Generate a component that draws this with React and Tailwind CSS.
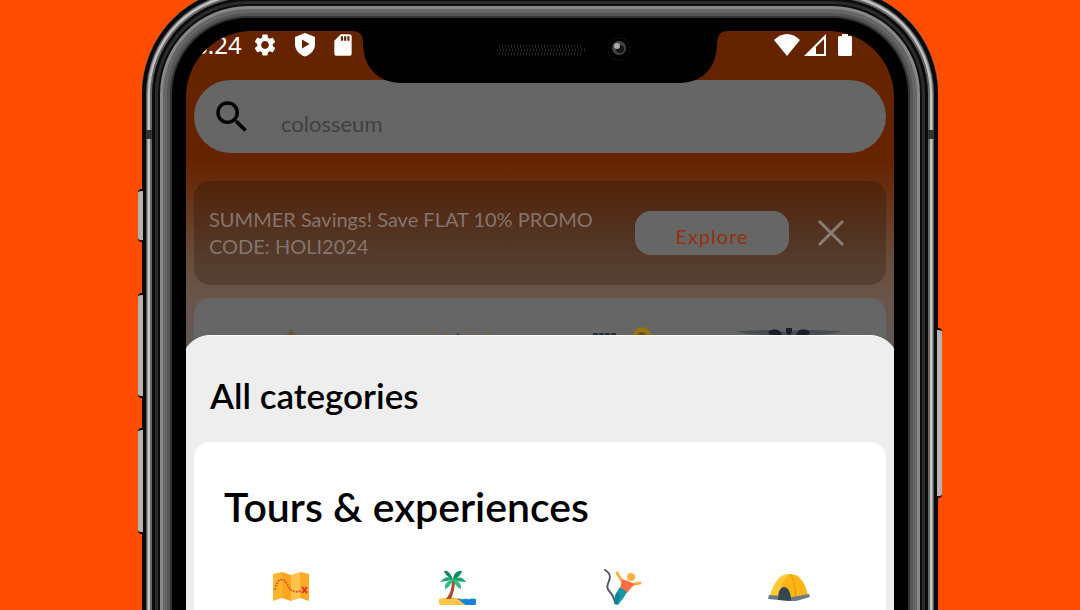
import { MdSearch, MdSettings, MdSdCard } from 'react-icons/md';

const ShieldPlayIcon = () => (
  <svg className="h-[26px] w-[22px]" viewBox="0 0 22 26" fill="currentColor">
    <path
      fillRule="evenodd"
      d="M11 1 1 5v7c0 6 4 10.500 10 12.500 6-2 10-6.500 10-12.500V5L11 1Zm-3 6.500v9l7.500-4.500L8 7.500Z"
    />
  </svg>
);

const WifiIcon = () => (
  <svg className="h-[22px] w-[26px]" viewBox="0 0 26 22" fill="currentColor">
    <path d="M13 22 0 6C4 2 8.500 0 13 0s9 2 13 6L13 22Z" />
  </svg>
);

const SignalIcon = () => (
  <svg className="h-[22px] w-[22px]" viewBox="0 0 22 22" fill="currentColor">
    <path fillRule="evenodd" d="M22 0v22H0L22 0Zm-2 5-8 8v7h8V5Z" />
  </svg>
);

const BatteryIcon = () => (
  <svg className="h-[22px] w-[14px]" viewBox="0 0 14 22" fill="currentColor">
    <path d="M4 0h6v2h3l1 1v18l-1 1H1l-1-1V3l1-1h3V0Z" />
  </svg>
);

const MapIcon = () => (
  <svg className="h-[30px] w-9" viewBox="0 0 36 30">
    <path d="M0 2 9 0v26l-9 3V2Z" fill="#ffb52e" />
    <path d="m9 0 9 3v26l-9-3V0Z" fill="#fda51c" />
    <path d="m18 3 9-3v26l-9 3V3Z" fill="#ffc24a" />
    <path d="m27 0 9 2v27l-9-3V0Z" fill="#fdab24" />
    <path
      d="M2 17C4 7 10 4 14 12c3 7 7 9 14 7"
      fill="none"
      stroke="#e0492f"
      strokeWidth="2"
      strokeLinecap="round"
      strokeDasharray="0 3"
    />
    <path d="m29 15 5 6m0-6-5 6" stroke="#e0392f" strokeWidth="2" />
  </svg>
);

const BeachIcon = () => (
  <svg className="h-[35px] w-[37px]" viewBox="0 0 37 35">
    <path d="M0 29c8-2 15-2 23 0l10 6H1l-1-1v-5Z" fill="#fdc648" />
    <path d="M18 29c3-1 4 1 7 0s4 1 6 0 4 0 6 0v5l-1 1h-9c-3-1-4-4-9-6Z" fill="#1583e0" />
    <path d="M13 10h3c0 8-2 14-4 19H7c4-5 6-11 6-19Z" fill="#ae4a2e" />
    <path d="M14 10C11 6 6 6 1 12c4-1 8-1 13-2Z" fill="#1ba46c" />
    <path d="M14 10C12 3 8 0 5 1c1 4 5 6 9 9Z" fill="#0f8a5a" />
    <path d="M14 10c0-6 4-10 9-9-1 4-4 7-9 9Z" fill="#128f5e" />
    <path d="M14 10c5-4 10-3 13 2-5 0-8-1-13-2Z" fill="#1ba46c" />
    <path d="M14 10c-5 0-9 4-8 9 3-1 6-4 8-9Zm0 0c5 0 9 4 8 9-3-1-6-4-8-9Z" fill="#2cbf83" />
  </svg>
);

const BungeeIcon = () => (
  <svg className="h-9 w-[38px]" viewBox="0 0 38 36">
    <path
      d="M1 1c5 3 6 6 4 11s-3 7 1 11 4 7 5 10"
      fill="none"
      stroke="#4b5b67"
      strokeWidth="2"
      strokeLinecap="round"
    />
    <path d="m13 4 5 8 8 4 10-2" fill="none" stroke="#fbb040" strokeWidth="3" strokeLinecap="round" strokeLinejoin="round" />
    <circle cx="27" cy="8" r="4" fill="#fbb040" />
    <path d="m18 10 6 2 7 3-4 4-4 5-7-4 2-10Z" fill="#ff6f43" />
    <path d="m16 18 7 5-3 5-6 8-4-1 1-9 5-8Z" fill="#1597a8" />
    <path d="m13 23 3 4-3 8-3-1 3-11Z" fill="#117f93" />
  </svg>
);

const TentIcon = () => (
  <svg className="h-[28px] w-[42px]" viewBox="0 0 42 28">
    <path d="M2 23C6 10 11 1 22 1c10 0 15 9 18 21l-15 4L2 23Z" fill="#fdb515" />
    <path d="M22 1c-7 5-9 12-10 22l-10 1C6 10 11 1 22 1Z" fill="#ffc933" />
    <path d="M22 1c4 5 5 14 6 24" fill="none" stroke="#e2970c" />
    <path d="m1 22 23 2 17-3 1 3-14 4h-4L0 26l1-4Z" fill="#6b7a83" />
    <path d="M10 27c0-8 2-13 6-13s7 5 7 14l-13-1Z" fill="#37474f" />
  </svg>
);

const Notch = () => (
  <div className="absolute left-1/2 top-0 z-20 -translate-x-1/2">
    <svg className="h-[54px] w-[376px]" viewBox="0 0 376 54">
      <path
        d="M0 0h376c-8 0-10 4-11 12 0 24-14 40-38 40H50C26 52 11 36 11 12 11 4 8 0 0 0Z"
        fill="#000"
      />
      <path d="M147 15h84M145 19h88M147 23h84" stroke="#292929" strokeWidth="3" strokeDasharray="1 2" />
      <circle cx="267" cy="18" r="11" fill="none" stroke="#333" strokeDasharray="1 2" />
      <circle cx="267" cy="17" r="7" fill="#444" />
      <circle cx="268" cy="18" r="4" fill="#151515" />
      <circle cx="265" cy="15" r="3" fill="#aaa" />
    </svg>
  </div>
);

const categories = [
  { name: 'Tours', Icon: MapIcon },
  { name: 'Beaches', Icon: BeachIcon },
  { name: 'Adventure', Icon: BungeeIcon },
  { name: 'Camping', Icon: TentIcon },
];

const StatusBar = () => (
  <div className="flex h-[49px] items-start justify-between pl-2 pr-[42px] text-white">
    <div className="flex items-center">
      <span className="font-['Noto_Sans',sans-serif] text-2xl leading-7">8:24</span>
      <MdSettings className="ml-2.5 size-[26px]" />
      <span className="ml-4">
        <ShieldPlayIcon />
      </span>
      <MdSdCard className="ml-3.5 size-[26px]" />
    </div>
    <div className="flex items-center pt-[3px]">
      <WifiIcon />
      <span className="ml-1">
        <SignalIcon />
      </span>
      <span className="ml-3">
        <BatteryIcon />
      </span>
    </div>
  </div>
);

const PromoBanner = () => (
  <div className="mt-7 flex h-[104px] items-center rounded-2xl bg-black/20 pl-[15px] pr-[39px]">
    <p className="flex-1 text-xl leading-[27px] text-[#84756e]">
      SUMMER Savings! Save FLAT 10% PROMO CODE: HOLI2024
    </p>
    <button className="h-11 w-[154px] rounded-2xl bg-[#666] pt-1.5 text-xl tracking-wider text-[#962f0c]">
      Explore
    </button>
    <button aria-label="Close" className="ml-[26px]">
      <svg className="size-8" viewBox="0 0 32 32" stroke="#8a7d75" strokeWidth="3">
        <path d="m4 4 24 24M28 4 4 28" />
      </svg>
    </button>
  </div>
);

// tops of the shortcut icons that stay visible above the sheet
const ShortcutCard = () => (
  <div className="mt-[13px] grid h-20 grid-cols-4 items-start justify-items-center rounded-t-2xl bg-[#666] px-3.5 pt-[29px]">
    <svg className="h-2 w-4" viewBox="0 0 16 8" fill="#6b5738">
      <path d="m8 1 2 4 5 3H1l5-3 2-4Z" />
    </svg>
    <svg className="h-2 w-16" viewBox="0 0 64 8" fill="#776238">
      <path d="M0 5h2v2H0zM8 2h3v2H8zM20 6h3v2h-3zM27 3h2v2h-2zM38 1h3v2h-3zM46 5h3v2h-3zM61 2h3v2h-3z" />
      <path d="M32 6h2v2h-2z" fill="#2c4468" />
    </svg>
    <svg className="h-2 w-16" viewBox="0 0 64 8">
      <path d="M2 7h24" stroke="#25303c" strokeWidth="2" strokeDasharray="5 1" />
      <circle cx="51" cy="9" r="9" fill="#96730c" />
      <circle cx="51" cy="9" r="4" fill="#6b4e10" />
    </svg>
    <svg className="h-2 w-[106px]" viewBox="0 0 106 8">
      <path d="M0 4c18 0 30-3 50 1 20-4 38-1 56-1-12 4-24 4-40 4H40C25 8 12 8 0 4Z" fill="#474b52" />
      <path d="M32 5c6-5 12-3 14 3H34l-2-3Zm42 0c-6-5-12-3-14 3h12l2-3ZM50 1h6v4l-2 3h-2l-2-3V1Z" fill="#182029" />
    </svg>
  </div>
);

const App = () => {
  return (
    <div className="flex h-screen overflow-hidden bg-[#ff4d00] px-[142px] font-['Lato',sans-serif]">
      {/* Phone body */}
      <div className="relative -mb-16 -mt-3 flex flex-1 rounded-t-[106px] bg-black px-11 pt-[43px] shadow-[inset_0_0_0_4px_#0a0a0a,inset_0_0_0_5px_#555,inset_0_0_0_6px_#999,inset_0_0_0_8px_#c4c4c4,inset_0_0_0_10px_#666,inset_0_0_0_13px_#0c0c0c,inset_0_0_0_16px_#2b2b2b,inset_0_0_0_18px_#0c0c0c,inset_0_0_0_21px_#888,inset_0_0_0_25px_#666,inset_0_0_0_28px_#555,inset_0_0_0_30px_#333]">
        <div className="absolute -left-1 top-[201px] h-[53px] w-[5px] rounded-l-sm border-y-2 border-black bg-[#b5b5b0]" />
        <div className="absolute -left-1 top-[305px] h-[105px] w-[5px] rounded-l-sm border-y-2 border-black bg-[#b5b5b0]" />
        <div className="absolute -left-1 top-[440px] h-[106px] w-[5px] rounded-l-sm border-y-2 border-black bg-[#b5b5b0]" />
        <div className="absolute -right-1 top-[340px] h-[170px] w-[5px] rounded-r-sm border-y-2 border-black bg-[#b5b5b0]" />
        <div className="absolute left-1 top-[142px] h-[9px] w-1.5 bg-[#333]" />
        <div className="absolute right-1 top-[142px] h-[9px] w-1.5 bg-[#333]" />

        {/* Screen */}
        <div className="relative flex flex-1 flex-col overflow-hidden rounded-t-[66px] bg-[linear-gradient(#662300_0px,#662300_130px,#69503f_240px,#69554c_270px,#5f5855_320px)]">
          <Notch />
          <StatusBar />

          <div className="px-2">
            <label className="flex h-[73px] items-center rounded-full bg-[#666] pl-[17px]">
              <MdSearch className="size-[42px] text-black" />
              <input
                type="search"
                aria-label="Search"
                placeholder="colosseum"
                className="ml-7 flex-1 bg-transparent pt-3.5 text-[22px] placeholder:text-[#404040] focus:outline-none"
              />
            </label>
            <PromoBanner />
            <ShortcutCard />
          </div>

          {/* Bottom sheet */}
          <div className="relative -mx-1 -mt-[43px] flex flex-1 flex-col rounded-t-[28px] border-t border-white bg-[#eee] px-3">
            <h1 className="px-4 pb-[25px] pt-[37px] text-[35px] font-semibold leading-[44px] text-black">
              All categories
            </h1>
            <div className="flex-1 rounded-t-2xl bg-white px-3.5">
              <h2 className="px-4 pt-[39px] text-[41px] font-semibold leading-[52px] text-black">
                Tours & experiences
              </h2>
              <ul className="mt-[34px] grid grid-cols-4">
                {categories.map(({ name, Icon }) => (
                  <li key={name} className="flex h-10 items-center justify-center">
                    <button aria-label={name}>
                      <Icon />
                    </button>
                  </li>
                ))}
              </ul>
            </div>
          </div>
        </div>
      </div>
    </div>
  );
};

export default App;
